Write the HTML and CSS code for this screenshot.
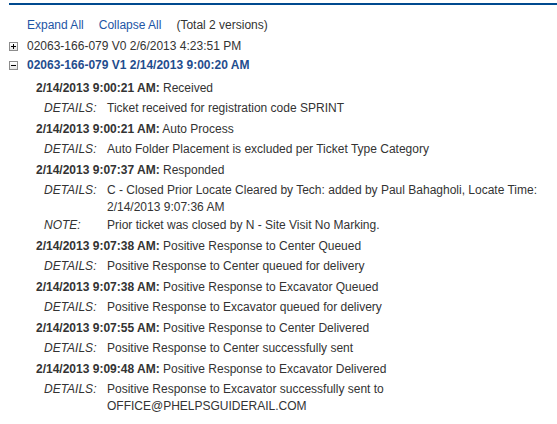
FILE: index.html
```html
<!DOCTYPE html>
<html lang="en">
<head>
  <meta charset="UTF-8"/>
  <title>Ticket Versions</title>
  <link rel="stylesheet" href="styles.css">
</head>
<body>
  <div class="panel">
    <div class="toolbar">
      <a href="#">Expand All</a>
      <a href="#">Collapse All</a>
      <span>(Total 2 versions)</span>
    </div>

    <div class="version"><span class="toggle plus"></span>02063-166-079 V0 2/6/2013 4:23:51 PM</div>
    <div class="version open"><span class="toggle minus"></span>02063-166-079 V1 2/14/2013 9:00:20 AM</div>

    <div class="events">
      <div class="event">
        <div class="event-head"><b>2/14/2013 9:00:21 AM:</b> Received</div>
        <div class="row"><span class="lbl">DETAILS:</span><span>Ticket received for registration code SPRINT</span></div>
      </div>
      <div class="event">
        <div class="event-head"><b>2/14/2013 9:00:21 AM:</b> Auto Process</div>
        <div class="row"><span class="lbl">DETAILS:</span><span>Auto Folder Placement is excluded per Ticket Type Category</span></div>
      </div>
      <div class="event">
        <div class="event-head"><b>2/14/2013 9:07:37 AM:</b> Responded</div>
        <div class="row"><span class="lbl">DETAILS:</span><span>C - Closed Prior Locate Cleared by Tech: added by Paul Bahagholi, Locate Time: 2/14/2013 9:07:36 AM</span></div>
        <div class="row"><span class="lbl">NOTE:</span><span>Prior ticket was closed by N - Site Visit No Marking.</span></div>
      </div>
      <div class="event">
        <div class="event-head"><b>2/14/2013 9:07:38 AM:</b> Positive Response to Center Queued</div>
        <div class="row"><span class="lbl">DETAILS:</span><span>Positive Response to Center queued for delivery</span></div>
      </div>
      <div class="event">
        <div class="event-head"><b>2/14/2013 9:07:38 AM:</b> Positive Response to Excavator Queued</div>
        <div class="row"><span class="lbl">DETAILS:</span><span>Positive Response to Excavator queued for delivery</span></div>
      </div>
      <div class="event">
        <div class="event-head"><b>2/14/2013 9:07:55 AM:</b> Positive Response to Center Delivered</div>
        <div class="row"><span class="lbl">DETAILS:</span><span>Positive Response to Center successfully sent</span></div>
      </div>
      <div class="event">
        <div class="event-head"><b>2/14/2013 9:09:48 AM:</b> Positive Response to Excavator Delivered</div>
        <div class="row"><span class="lbl">DETAILS:</span><span>Positive Response to Excavator successfully sent to OFFICE@PHELPSGUIDERAIL.COM</span></div>
      </div>
    </div>
  </div>
</body>
</html>
```

FILE: styles.css
```css
body { margin:0; background:#fff; color:#333; font-family:"Liberation Sans", Arial, sans-serif; font-size:12px; }
.panel { margin:3px 0 0 9px; border-top:2px solid #004a8f; padding-right:8px; }

.toolbar { display:flex; gap:15px; margin:12px 0 3px 18px; line-height:17px; }
.toolbar a { color:#1d55a5; text-decoration:none; }

.version { display:flex; align-items:center; line-height:19px; }
.version.open { color:#1f4d8e; font-weight:bold; }
.toggle { position:relative; box-sizing:border-box; width:9px; height:9px; margin-right:9px; border:1px solid #8c8c8c; background:linear-gradient(#fff, #e4e4e4); }
.toggle::before, .plus::after { content:""; position:absolute; background:#000; left:1px; top:3px; width:5px; height:1px; }
.plus::after { left:3px; top:1px; width:1px; height:5px; }

.events { margin:4px 0 0 27px; }
.event { padding-bottom:3px; }
.event-head { line-height:17px; padding:1px 0 2px; }
.event-head b { color:#333; }
.row { display:grid; grid-template-columns:63px 1fr; line-height:17px; padding-top:1px; margin-left:8px; }
.lbl { font-style:italic; }
```
